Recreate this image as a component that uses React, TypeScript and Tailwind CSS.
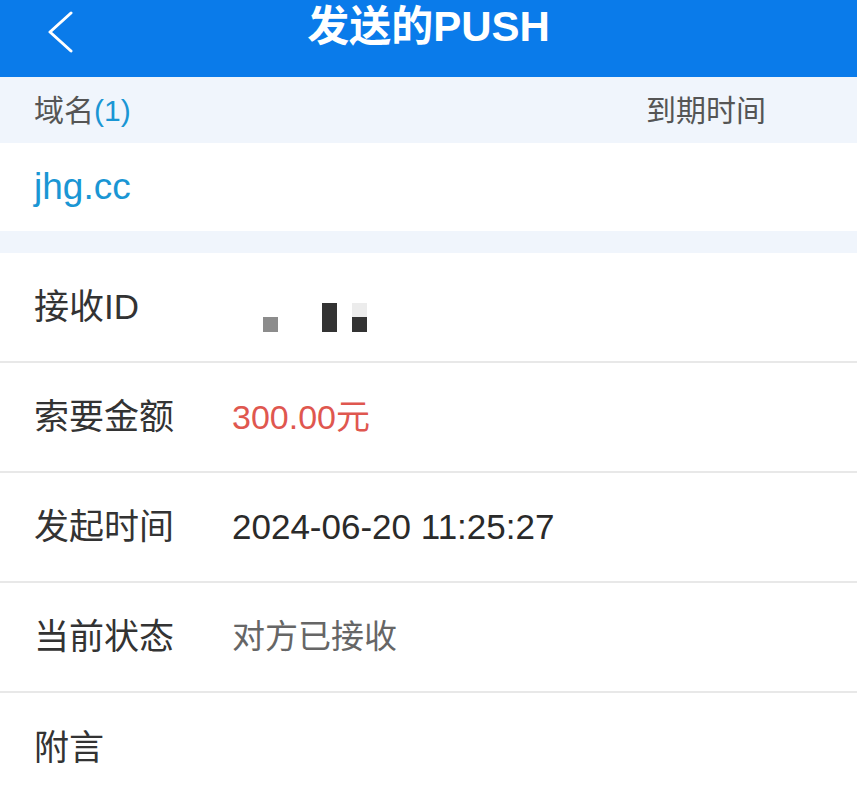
import { FC } from "react";

const font = {
  fontFamily: '"Liberation Sans", "Noto Sans CJK SC", sans-serif',
};

const Row: FC<{ label: string; children?: React.ReactNode; last?: boolean }> = ({
  label,
  children,
  last,
}) => (
  <div
    className={`flex h-[110px] items-center bg-white pl-[34px] ${
      last ? "" : "border-b-2 border-[#e8e8e8]"
    }`}
  >
    <div className="w-[198px] shrink-0 text-[35px] text-[#333]">{label}</div>
    <div className="flex items-center text-[35px]">{children}</div>
  </div>
);

const App: FC = () => {
  return (
    <div className="h-[800px] w-[857px] overflow-hidden bg-white" style={font}>
      <header className="relative flex h-[77px] items-start justify-center bg-[#0a7bea]">
        <svg
          className="absolute left-[46px] top-[11px]"
          width="28"
          height="42"
          viewBox="0 0 28 42"
          fill="none"
        >
          <path
            d="M25 2 L4 21 L25 40"
            stroke="white"
            strokeWidth="3"
            strokeLinecap="round"
            strokeLinejoin="round"
          />
        </svg>
        <h1 className="mt-[2px] text-[42px] font-bold leading-[50px] text-white">发送的PUSH</h1>
      </header>

      <div className="flex h-[66px] items-center justify-between bg-[#f0f5fc] pl-[34px] pr-[91px] text-[30px] text-[#555]">
        <span>
          域名<span className="text-[#1a96d4]">(1)</span>
        </span>
        <span>到期时间</span>
      </div>

      <div className="flex h-[88px] items-center bg-white pl-[34px] text-[37px] text-[#1a96d4]">
        jhg.cc
      </div>

      <div className="h-[22px] bg-[#f0f5fc]" />

      <Row label="接收ID">
        <div className="ml-[31px] mt-[20px] flex items-end">
          <div className="h-[15px] w-[15px] bg-[#8c8c8c]" />
          <div className="ml-[44px] h-[29px] w-[15px] bg-[#333]" />
          <div className="ml-[15px] flex flex-col">
            <div className="h-[14px] w-[15px] bg-[#ececec]" />
            <div className="h-[15px] w-[15px] bg-[#333]" />
          </div>
        </div>
      </Row>
      <Row label="索要金额">
        <span className="text-[34px] text-[#df574f]">300.00元</span>
      </Row>
      <Row label="发起时间">
        <span className="text-[#2a2a2a]">2024-06-20 11:25:27</span>
      </Row>
      <Row label="当前状态">
        <span className="text-[33px] text-[#666]">对方已接收</span>
      </Row>
      <Row label="附言" last />
    </div>
  );
};

export default App;
